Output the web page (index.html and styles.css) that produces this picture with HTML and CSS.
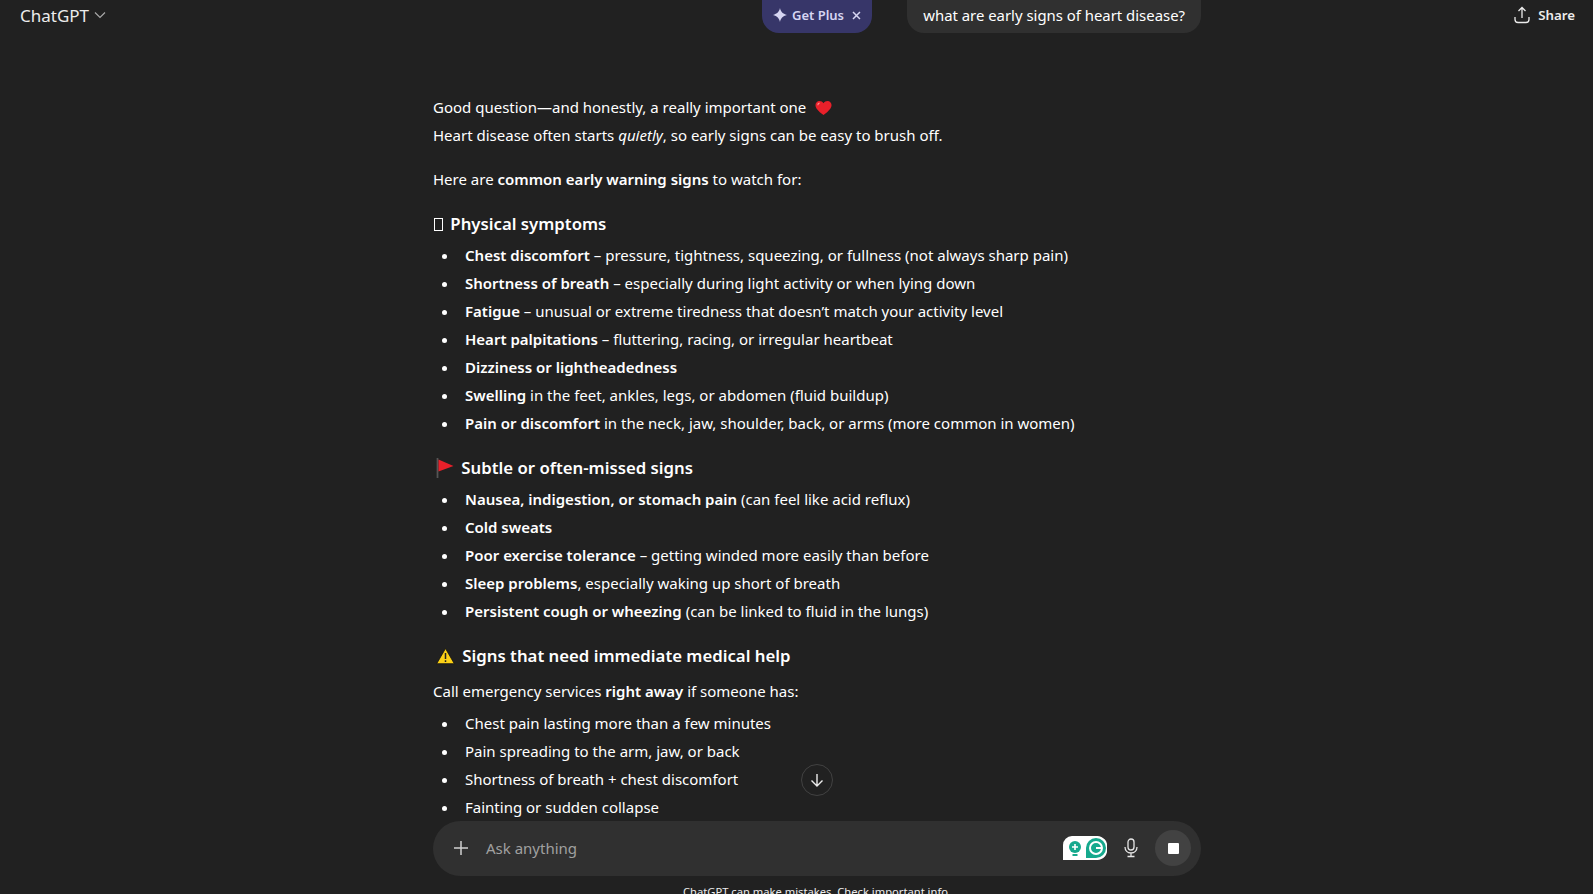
FILE: index.html
```html
<!DOCTYPE html>
<html lang="en">
<head>
    <meta charset="UTF-8">
    <meta name="viewport" content="width=device-width, initial-scale=1.0">
    <title>ChatGPT</title>
    <link rel="stylesheet" href="styles.css">
</head>
<body>
    <div class="page">
        <header class="topbar">
            <div class="model-name">
                <span>ChatGPT</span>
                <svg class="chevron" width="12" height="12" viewBox="0 0 12 12"><path d="M1 3.500l5 5 5-5" fill="none" stroke="#a8a8a8" stroke-width="1.200"/></svg>
            </div>
            <div class="top-center">
                <div class="get-plus">
                    <svg width="14" height="14" viewBox="0 0 14 14"><path d="M7 0c.9 4 2.600 5.600 7 7-4.400 1.400-6.100 3-7 7-.9-4-2.600-5.600-7-7 4.400-1.400 6.100-3 7-7z" fill="#d6d5f2"/></svg>
                    <span>Get Plus</span>
                    <svg class="plus-close" width="9" height="9" viewBox="0 0 9 9"><path d="M1 1l7 7M8 1l-7 7" stroke="#d6d5f2" stroke-width="1.500"/></svg>
                </div>
                <div class="question">what are early signs of heart disease?</div>
            </div>
            <div class="share">
                <svg width="16" height="18" viewBox="0 0 16 18"><path d="M8 12V2M4.500 5L8 1.500 11.500 5M1 11v2.500c0 1.700 1.300 3 3 3h8c1.700 0 3-1.300 3-3V11" fill="none" stroke="#ececec" stroke-width="1.300"/></svg>
                <span>Share</span>
            </div>
        </header>

        <main class="chat">
            <div class="answer">
                <p>Good question—and honestly, a really important one
                    <svg class="emoji heart" width="17" height="16" viewBox="0 0 18 16"><path d="M9 15.500C3 11 .5 8 .5 4.800.5 2.300 2.400.5 4.700.5 6.500.5 8 1.400 9 3c1-1.600 2.500-2.500 4.300-2.500 2.300 0 4.200 1.800 4.200 4.300C17.500 8 15 11 9 15.500z" fill="#e8202a"/><path d="M3 5c0-1 .7-2 1.800-2.200" fill="none" stroke="#ff8a8f" stroke-width="1.200"/></svg>
                    <br>Heart disease often starts <em>quietly</em>, so early signs can be easy to brush off.</p>
                <p>Here are <strong>common early warning signs</strong> to watch for:</p>

                <h3><span class="tofu"></span> Physical symptoms</h3>
                <ul>
                    <li><strong>Chest discomfort</strong> – pressure, tightness, squeezing, or fullness (not always sharp pain)</li>
                    <li><strong>Shortness of breath</strong> – especially during light activity or when lying down</li>
                    <li><strong>Fatigue</strong> – unusual or extreme tiredness that doesn’t match your activity level</li>
                    <li><strong>Heart palpitations</strong> – fluttering, racing, or irregular heartbeat</li>
                    <li><strong>Dizziness or lightheadedness</strong></li>
                    <li><strong>Swelling</strong> in the feet, ankles, legs, or abdomen (fluid buildup)</li>
                    <li><strong>Pain or discomfort</strong> in the neck, jaw, shoulder, back, or arms (more common in women)</li>
                </ul>

                <h3>
                    <svg class="emoji flag" width="18" height="20" viewBox="0 0 18 20"><path d="M1.500 0v20" stroke="#555" stroke-width="1.800"/><path d="M2.500 1.500l15 6.500-15 5.500z" fill="#e8202a"/></svg>
                    Subtle or often-missed signs</h3>
                <ul>
                    <li><strong>Nausea, indigestion, or stomach pain</strong> (can feel like acid reflux)</li>
                    <li><strong>Cold sweats</strong></li>
                    <li><strong>Poor exercise tolerance</strong> – getting winded more easily than before</li>
                    <li><strong>Sleep problems</strong>, especially waking up short of breath</li>
                    <li><strong>Persistent cough or wheezing</strong> (can be linked to fluid in the lungs)</li>
                </ul>

                <h3>
                    <svg class="emoji warn" width="19" height="18" viewBox="0 0 19 17"><path d="M9.500 1L18.300 16.200H.700z" fill="#fcd116" stroke="#111" stroke-width=".8"/><path d="M9.500 5.500v6M9.500 12.800v1.800" stroke="#222" stroke-width="1.500"/></svg>
                    Signs that need immediate medical help</h3>
                <p>Call emergency services <strong>right away</strong> if someone has:</p>
                <ul>
                    <li>Chest pain lasting more than a few minutes</li>
                    <li>Pain spreading to the arm, jaw, or back</li>
                    <li>Shortness of breath + chest discomfort</li>
                    <li>Fainting or sudden collapse</li>
                </ul>
            </div>
            <button class="scroll-down">
                <svg width="16" height="16" viewBox="0 0 16 16"><path d="M8 2v12M2.500 8.500L8 14l5.500-5.500" fill="none" stroke="#ececec" stroke-width="1.400"/></svg>
            </button>
        </main>

        <div class="composer">
            <svg class="add" width="16" height="16" viewBox="0 0 16 16"><path d="M8 1v14M1 8h14" stroke="#d0d0d0" stroke-width="1.500"/></svg>
            <span class="placeholder">Ask anything</span>
            <div class="grammarly">
                <svg width="44" height="24" viewBox="0 0 44 24">
                    <path d="M9 0h25a10 10 0 0 1 10 12 10 10 0 0 1-10 12H0V9a9 9 0 0 1 9-9z" fill="#fff"/>
                    <circle cx="12" cy="11" r="6" fill="#15a98d"/>
                    <path d="M12 8v6M9 11h6" stroke="#fff" stroke-width="1.600"/>
                    <path d="M9.500 19h5" stroke="#15a98d" stroke-width="2"/>
                    <path d="M33 2a10 10 0 0 1 0 20H23V12A10 10 0 0 1 33 2z" fill="#15a98d"/>
                    <circle cx="33" cy="12" r="6" fill="none" stroke="#fff" stroke-width="2"/>
                    <path d="M33 12h6" stroke="#fff" stroke-width="2"/>
                </svg>
            </div>
            <svg class="mic" width="16" height="20" viewBox="0 0 16 20"><rect x="5" y="1" width="6" height="11" rx="3" fill="none" stroke="#e6e6e6" stroke-width="1.300"/><path d="M2 9c0 3.500 2.500 6 6 6s6-2.500 6-6M8 15v3M4.500 18.500h7" fill="none" stroke="#e6e6e6" stroke-width="1.300"/></svg>
            <button class="stop"><span class="stop-square"></span></button>
        </div>
        <div class="disclaimer">ChatGPT can make mistakes. Check important info.</div>
    </div>
</body>
</html>
```

FILE: styles.css
```css
* {
    margin: 0;
    padding: 0;
    box-sizing: border-box;
}

html, body {
    height: 100%;
    overflow: hidden;
}

body {
    background-color: #212121;
    color: #fff;
    font-family: "Noto Sans", "Open Sans", Arial, sans-serif;
    font-size: 15px;
}

.page {
    display: flex;
    flex-direction: column;
    height: 894px;
    overflow: hidden;
}

.topbar {
    display: grid;
    grid-template-columns: 433px 768px 1fr;
    height: 33px;
    flex-shrink: 0;
    overflow: hidden;
}

.model-name {
    display: flex;
    align-items: center;
    gap: 5px;
    padding: 0 0 3px 20px;
    font-size: 17px;
    color: #ececec;
}

.top-center {
    display: flex;
    align-items: flex-end;
    justify-content: space-between;
    padding-left: 329px;
}

.get-plus {
    display: flex;
    align-items: center;
    gap: 5px;
    width: 110px;
    height: 33px;
    padding: 0 11px 3px;
    border-radius: 0 0 17px 17px;
    background-color: #373669;
    color: #d6d5f2;
    font-size: 13px;
    font-weight: 600;
    white-space: nowrap;
}

.plus-close {
    margin-left: 3px;
}

.question {
    display: flex;
    align-items: center;
    height: 33px;
    padding: 0 16px 3px;
    border-radius: 0 0 17px 17px;
    background-color: #303030;
    font-size: 14.900px;
    white-space: nowrap;
}

.share {
    display: flex;
    align-items: center;
    justify-content: flex-end;
    gap: 8px;
    padding: 0 18px 3px 0;
    font-size: 13.300px;
    font-weight: 600;
    color: #ececec;
}

.chat {
    position: relative;
    flex: 1;
    overflow: hidden;
    padding: 60px 0 0 433px;
}

.answer {
    width: 768px;
    line-height: 28px;
}

.answer p + p {
    margin-top: 16px;
}

.answer h3 {
    margin: 17px 0 3px;
    font-size: 16.750px;
    font-weight: 600;
    line-height: 28px;
}

.answer h3 + p {
    margin-top: 7px;
}

.answer p + ul {
    margin-top: 4px;
}

.answer strong {
    font-weight: 600;
}

.answer ul {
    padding-left: 26px;
}

.answer li {
    padding-left: 6px;
}

.emoji {
    vertical-align: -3px;
}

.heart {
    margin-left: 5px;
}

.flag {
    margin-left: 3px;
    margin-right: 3px;
    vertical-align: -4px;
}

.warn {
    margin-left: 3px;
    margin-right: 3px;
}

.tofu {
    display: inline-block;
    width: 9px;
    height: 13px;
    margin: 0 3px 0 1px;
    border: 1px solid #fff;
    vertical-align: -1px;
}

.scroll-down {
    position: absolute;
    left: 801px;
    top: 731px;
    display: flex;
    align-items: center;
    justify-content: center;
    width: 32px;
    height: 32px;
    border: 1px solid #424242;
    border-radius: 50%;
    background-color: #212121;
}

.composer {
    display: flex;
    align-items: center;
    flex-shrink: 0;
    width: 768px;
    height: 55px;
    margin-left: 433px;
    padding: 0 10px 1px 20px;
    border-radius: 28px;
    background-color: #303030;
}

.placeholder {
    flex: 1;
    margin-left: 17px;
    color: #a0a0a0;
}

.grammarly {
    display: flex;
    margin-right: 16px;
}

.mic {
    margin-right: 16px;
}

.stop {
    display: flex;
    align-items: center;
    justify-content: center;
    width: 36px;
    height: 36px;
    border: none;
    border-radius: 50%;
    background-color: #424242;
}

.stop-square {
    width: 11px;
    height: 11px;
    border-radius: 1px;
    background-color: #fff;
}

.disclaimer {
    flex-shrink: 0;
    width: 768px;
    height: 10px;
    margin: 8px 0 0 433px;
    text-align: center;
    font-size: 11.200px;
    line-height: 16px;
    color: #ececec;
}
```
